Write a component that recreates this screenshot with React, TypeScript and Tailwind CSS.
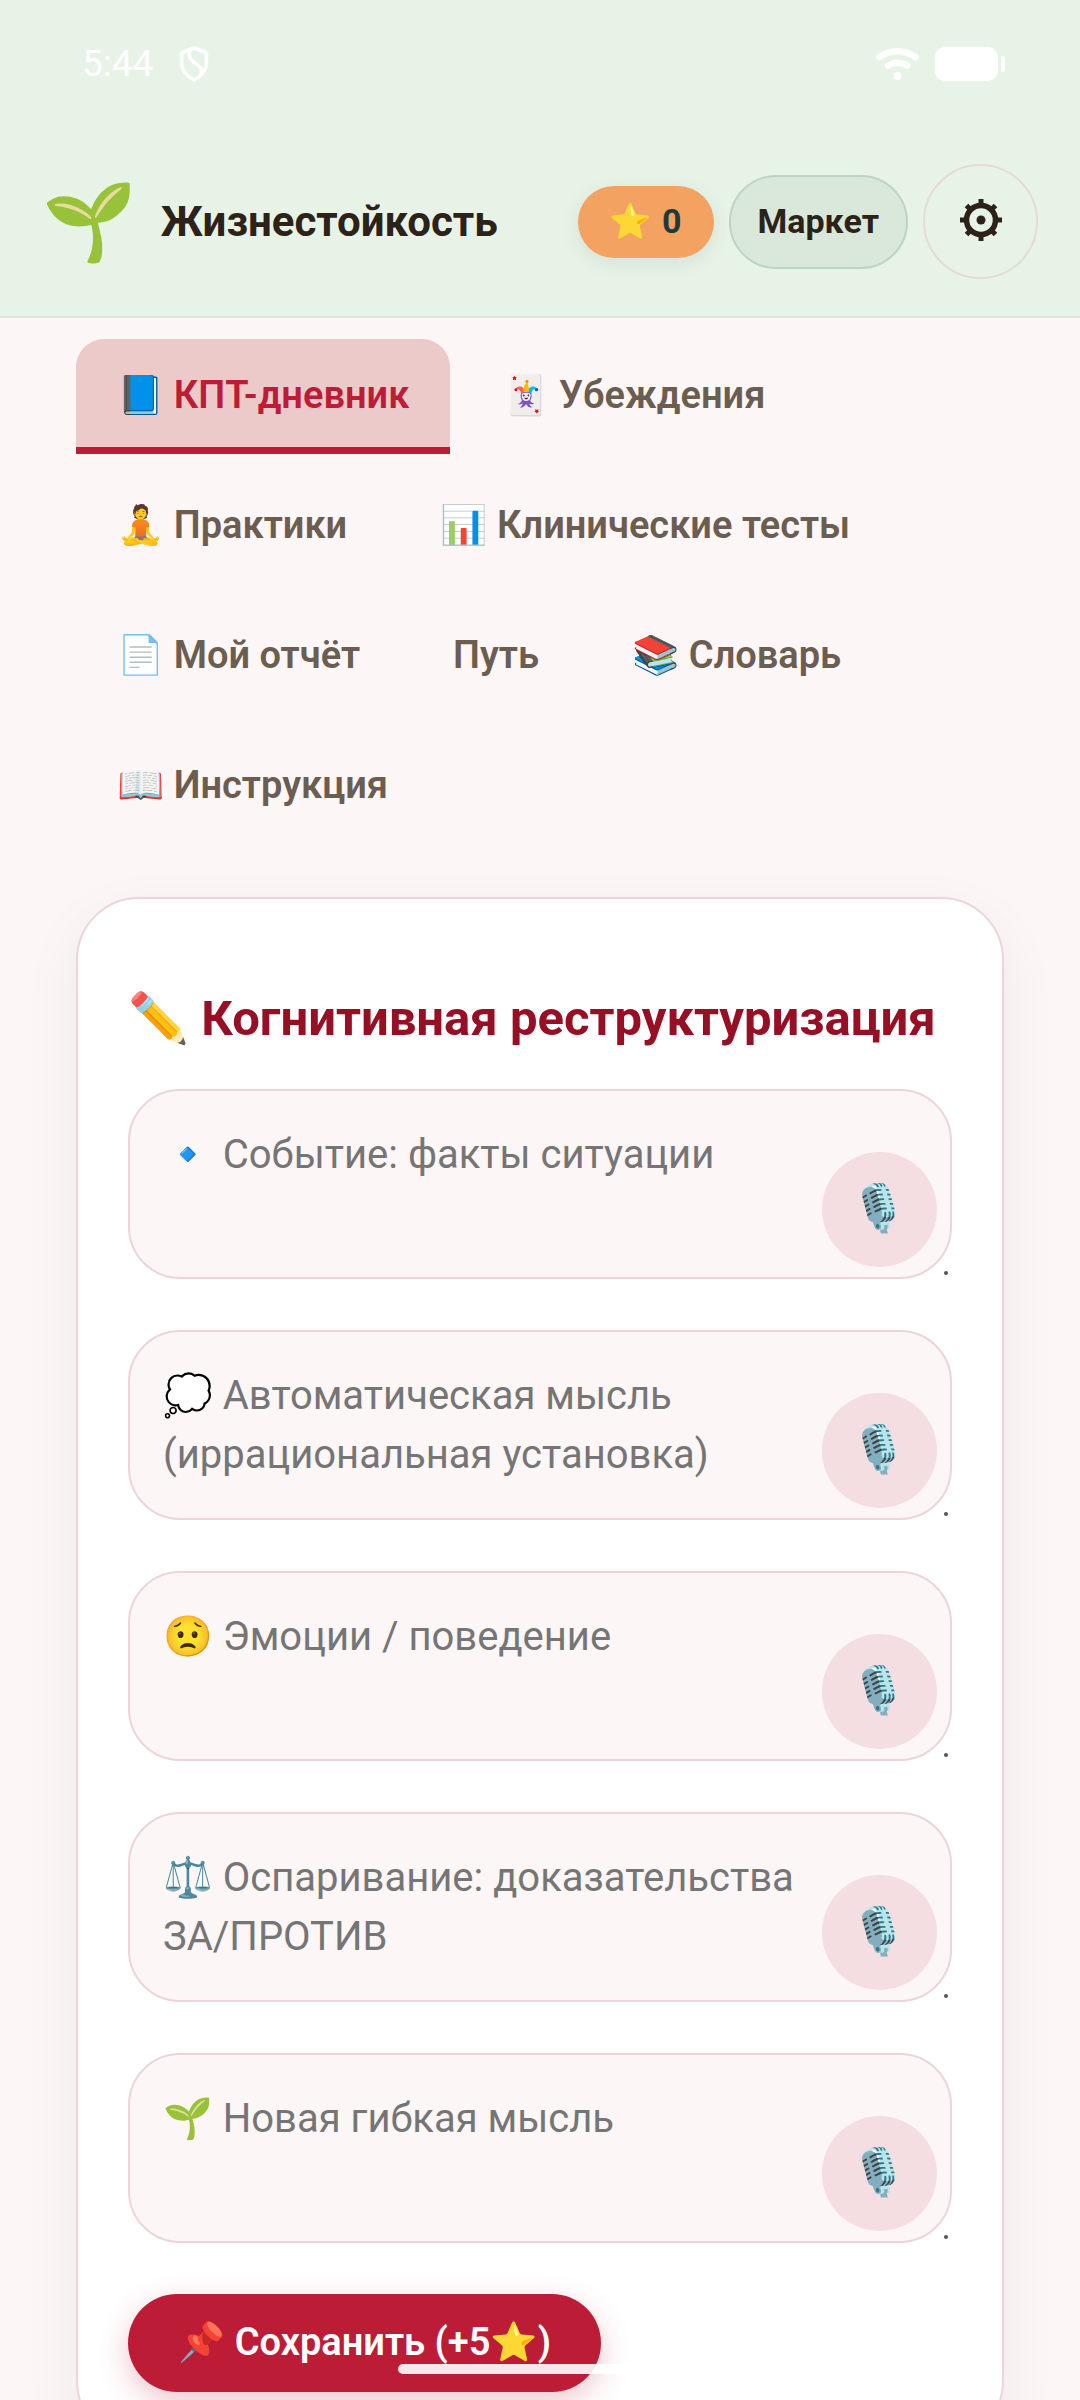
import { useState } from 'react'

interface Tab {
  id: string
  label: string
}

interface Field {
  id: string
  placeholder: string
}

const tabs: Tab[] = [
  { id: 'cbt', label: '📘 КПТ-дневник' },
  { id: 'beliefs', label: '🃏 Убеждения' },
  { id: 'practices', label: '🧘 Практики' },
  { id: 'tests', label: '📊 Клинические тесты' },
  { id: 'report', label: '📄 Мой отчёт' },
  { id: 'path', label: 'Путь' },
  { id: 'glossary', label: '📚 Словарь' },
  { id: 'guide', label: '📖 Инструкция' },
]

const fields: Field[] = [
  { id: 'event', placeholder: '🔹 Событие: факты ситуации' },
  { id: 'thought', placeholder: '💭 Автоматическая мысль (иррациональная установка)' },
  { id: 'emotion', placeholder: '😟 Эмоции / поведение' },
  { id: 'dispute', placeholder: '⚖️ Оспаривание: доказательства ЗА/ПРОТИВ' },
  { id: 'newThought', placeholder: '🌱 Новая гибкая мысль' },
]

function StatusBar() {
  return (
    <div className="flex items-center justify-between h-32 pl-[82px] pr-[75px] text-white">
      <div className="flex items-center gap-[26px]">
        <span className="text-[37px] leading-[44px]">5:44</span>
        <svg width="30" height="36" viewBox="0 0 30 36" fill="none" stroke="currentColor" strokeWidth="3.5" strokeLinejoin="round" strokeLinecap="round">
          <path d="M15 2 L26 6 Q27.500 6.500 27.500 8 V16 C27.500 24 22 30.500 15 34 C8 30.500 2.500 24 2.500 16 V8 Q2.500 6.500 4 6 Z" />
          <path d="M11.500 4 C8.500 8 10 12 14 15.500 C20 20 24 22 22 27" />
        </svg>
      </div>
      <div className="flex items-center gap-4">
        <svg width="43" height="34" viewBox="0 0 43 34" fill="none" stroke="currentColor" strokeWidth="6.5" strokeLinecap="round">
          <path d="M3.500 10 Q21.500 -1.500 39.500 10" />
          <path d="M12 18.500 Q21.500 13 31 18.500" />
          <circle cx="21.500" cy="29" r="4" fill="currentColor" stroke="none" />
        </svg>
        <svg width="70" height="34" viewBox="0 0 70 34" fill="currentColor">
          <rect width="63" height="34" rx="10" />
          <path d="M66 9 h1 a3 3 0 0 1 3 3 v10 a3 3 0 0 1 -3 3 h-1 z" />
        </svg>
      </div>
    </div>
  )
}

function Header() {
  return (
    <header className="shrink-0 bg-[#e8f3e8] border-b-2 border-[#dae6dd]">
      <StatusBar />
      <div className="flex items-center justify-between px-[42px] pt-9 pb-[37px]">
        <div className="flex items-center gap-6">
          <span className="text-[76px] leading-[88px]">🌱</span>
          <h1 className="text-[42px] leading-[56px] font-bold text-[#2d2218]">Жизнестойкость</h1>
        </div>
        <div className="flex items-center gap-[15px]">
          <span className="h-[72px] px-8 flex items-center gap-[10px] rounded-full bg-[#f4a261] text-[34px] font-bold text-[#1f3a3a] shadow-[0_5px_20px_rgba(0,0,0,0.08)]">
            <span>⭐</span>
            <span>0</span>
          </span>
          <button className="h-[94px] px-[27px] rounded-full border-2 border-[#bcd4c6] bg-[#dae8dc] text-[34px] font-bold text-[#2d2218]">
            Маркет
          </button>
          <button
            aria-label="Настройки"
            className="size-[115px] pb-1 rounded-full border-2 border-[#e6dad5] flex items-center justify-center text-[#2d2218]"
          >
            <svg width="42" height="42" viewBox="0 0 42 42" fill="none" stroke="currentColor">
              <circle cx="21" cy="21" r="14.5" strokeWidth="5.5" />
              <circle cx="21" cy="21" r="4.5" fill="currentColor" stroke="none" />
              <path
                strokeWidth="5"
                d="M21 0 V6 M21 36 V42 M0 21 H6 M36 21 H42 M6.500 6.500 L11 11 M31 31 L35.500 35.500 M35.500 6.500 L31 11 M11 31 L6.500 35.500"
              />
            </svg>
          </button>
        </div>
      </div>
    </header>
  )
}

function VoiceField({ field }: { field: Field }) {
  const [value, setValue] = useState('')

  return (
    <div className="relative">
      <textarea
        id={field.id}
        aria-label={field.placeholder}
        value={value}
        onChange={(e) => setValue(e.target.value)}
        placeholder={field.placeholder}
        className="block w-full h-[190px] pl-[33px] pr-[120px] py-[34px] rounded-[52px] border-2 border-[#ecd4da] bg-[#fcf6f6] text-[40px] leading-[59px] text-[#2d2218] placeholder:text-[#757575] resize-none outline-none overflow-hidden"
      />
      <button
        aria-label="Голосовой ввод"
        className="absolute right-[15px] bottom-3 size-[115px] pb-1 rounded-full bg-[#f5dee2] text-[46px] leading-none flex items-center justify-center"
      >
        🎙️
      </button>
      {/* resize grip */}
      <span className="absolute right-1 bottom-1 size-1 rounded-full bg-[#555555]" />
    </div>
  )
}

export default function App() {
  const [activeTab, setActiveTab] = useState('cbt')

  return (
    <div className="h-screen flex flex-col bg-[#fcf6f6] font-['Roboto','Noto_Color_Emoji',sans-serif]">
      <Header />

      <main className="flex-1 min-h-0 overflow-y-auto [scrollbar-width:none] px-[76px] pt-[21px] pb-16">
        <nav className="flex flex-wrap gap-x-[11px] gap-y-[15px]">
          {tabs.map((tab) => {
            const isActive = activeTab === tab.id
            return (
              <button
                key={tab.id}
                onClick={() => setActiveTab(tab.id)}
                className={`h-[115px] px-[41px] pt-[3px] rounded-t-[28px] border-b-[7px] text-[38px] leading-[44px] font-semibold ${
                  isActive ? 'bg-[#eccaca] border-[#bc1c36] text-[#bc1c36]' : 'border-transparent text-[#6b5d50]'
                }`}
              >
                {tab.label}
              </button>
            )
          })}
        </nav>

        <section className="mt-[53px] px-[50px] pt-[84px] pb-[50px] rounded-[63px] border-2 border-[#ecd4da] bg-white shadow-[0_20px_60px_rgba(0,0,0,0.06)]">
          <h2 className="mb-[34px] text-[49px] leading-[72px] font-bold text-[#970f25]">
            ✏️ Когнитивная реструктуризация
          </h2>
          <form className="flex flex-col items-stretch gap-[51px]" onSubmit={(e) => e.preventDefault()}>
            {fields.map((field) => (
              <VoiceField key={field.id} field={field} />
            ))}
            <button
              type="submit"
              className="self-start h-[98px] px-[50px] pb-[2px] rounded-full bg-[#bc1c36] text-[38px] leading-[44px] font-semibold text-white shadow-[0_10px_30px_rgba(188,28,54,0.25)]"
            >
              📌 Сохранить (+5⭐)
            </button>
          </form>
        </section>
      </main>

      {/* gesture bar */}
      <div className="fixed inset-x-0 bottom-[26px] flex justify-center pointer-events-none">
        <div className="w-[284px] h-[10px] rounded-full bg-white/90" />
      </div>
    </div>
  )
}
